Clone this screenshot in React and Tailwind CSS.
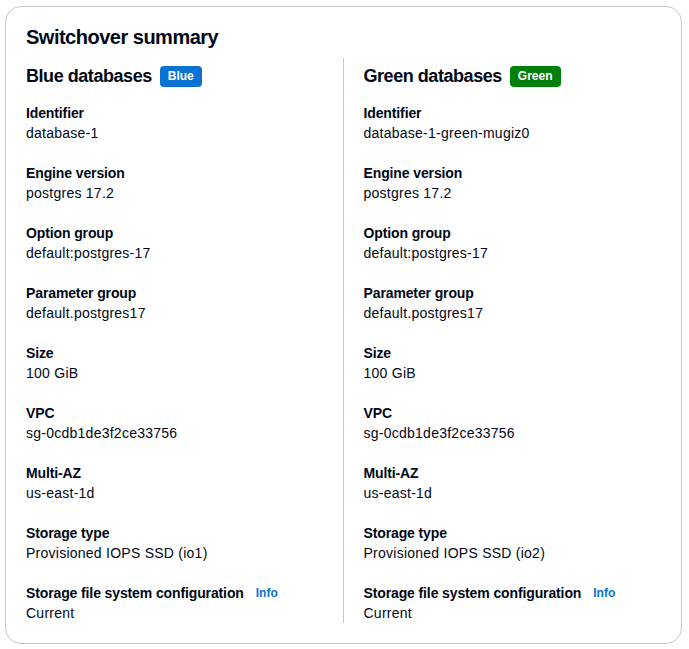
const blue = [
  { label: 'Identifier', value: 'database-1' },
  { label: 'Engine version', value: 'postgres 17.2' },
  { label: 'Option group', value: 'default:postgres-17' },
  { label: 'Parameter group', value: 'default.postgres17' },
  { label: 'Size', value: '100 GiB' },
  { label: 'VPC', value: 'sg-0cdb1de3f2ce33756' },
  { label: 'Multi-AZ', value: 'us-east-1d' },
  { label: 'Storage type', value: 'Provisioned IOPS SSD (io1)' },
  { label: 'Storage file system configuration', value: 'Current', info: true },
];

const green = [
  { label: 'Identifier', value: 'database-1-green-mugiz0' },
  { label: 'Engine version', value: 'postgres 17.2' },
  { label: 'Option group', value: 'default:postgres-17' },
  { label: 'Parameter group', value: 'default.postgres17' },
  { label: 'Size', value: '100 GiB' },
  { label: 'VPC', value: 'sg-0cdb1de3f2ce33756' },
  { label: 'Multi-AZ', value: 'us-east-1d' },
  { label: 'Storage type', value: 'Provisioned IOPS SSD (io2)' },
  { label: 'Storage file system configuration', value: 'Current', info: true },
];

const Column = ({ title, badge, badgeClass, items, className }) => (
  <div className={className}>
    <div className="flex items-center gap-2 pt-[6px] h-[30px]">
      <h3 className="text-[18px] leading-6 font-bold tracking-[-0.45px]">{title}</h3>
      <span className={`h-[21px] px-2 rounded-[4px] text-[12px] leading-[21px] font-bold text-white ${badgeClass}`}>
        {badge}
      </span>
    </div>
    <div className="mt-[15px] flex flex-col gap-5">
      {items.map((it) => (
        <div key={it.label} className="text-[14px] leading-5">
          <div className="font-bold flex items-center tracking-[-0.12px]">
            {it.label}
            {it.info && (
              <span className="ml-3 text-[12px] font-bold text-[#0972d3] tracking-normal">Info</span>
            )}
          </div>
          <div className="tracking-[0.25px]">{it.value}</div>
        </div>
      ))}
    </div>
  </div>
);

export default function App() {
  return (
    <div
      className="w-[689px] h-[649px] bg-white pt-[6px] px-[5px] text-[#000716]"
      style={{ fontFamily: '"Liberation Sans", Arial, sans-serif' }}
    >
      <div className="w-[677px] h-[638px] border border-[#c6c6cd] rounded-2xl pt-[18px] px-[20px] pb-5">
        <h2 className="text-[20px] leading-6 font-bold tracking-[-0.5px]">Switchover summary</h2>
        <div className="mt-[9px] grid grid-cols-2">
          <Column
            title="Blue databases"
            badge="Blue"
            badgeClass="bg-[#0972d3]"
            items={blue}
            className="pr-5 border-r border-[#c6c6cd]"
          />
          <Column
            title="Green databases"
            badge="Green"
            badgeClass="bg-[#037f0c]"
            items={green}
            className="pl-5"
          />
        </div>
      </div>
    </div>
  );
}
